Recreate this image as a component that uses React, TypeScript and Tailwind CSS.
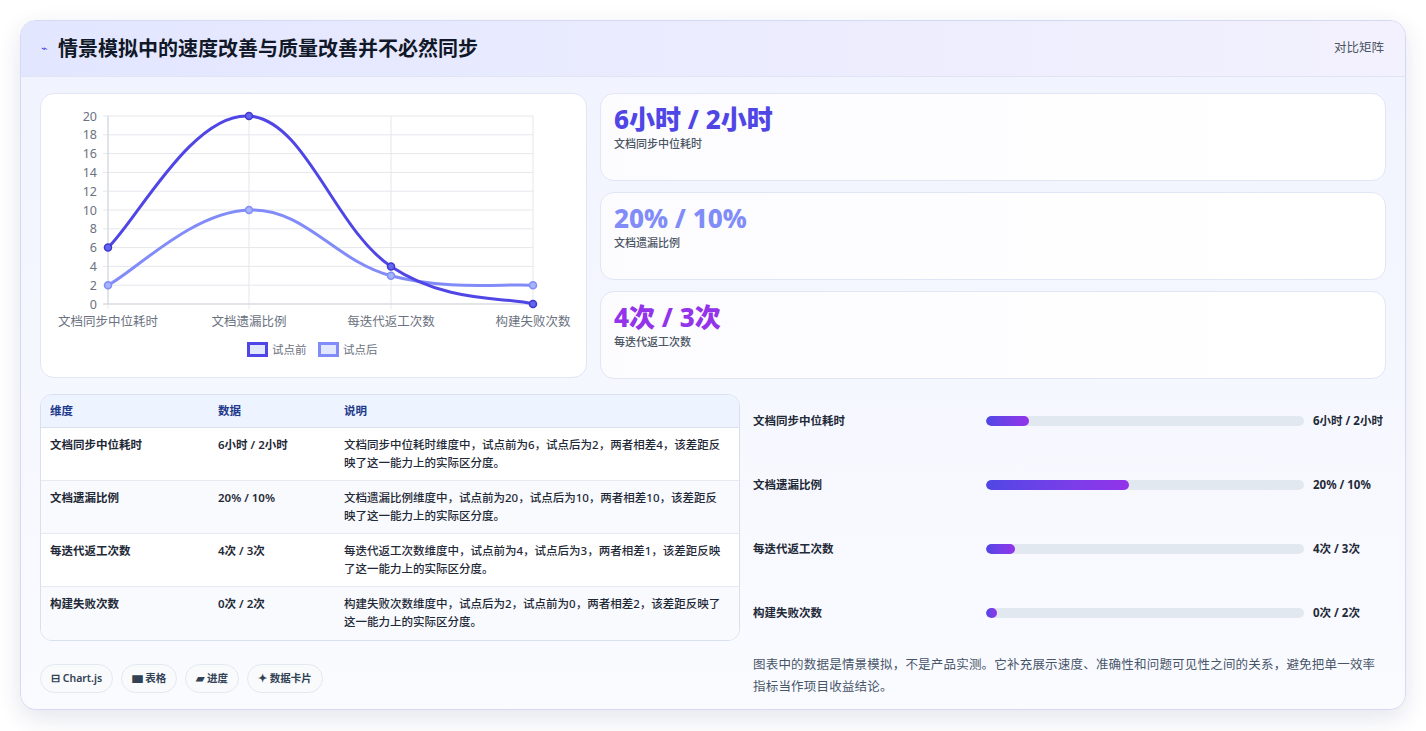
import React from "react";

const font = { fontFamily: '"Noto Sans", "Noto Sans CJK SC", sans-serif' };

type P = [number, number];
function path(pts: P[]) {
  const t = 0.4;
  let d = `M${pts[0][0]},${pts[0][1]}`;
  for (let i = 0; i < pts.length - 1; i++) {
    const p0 = pts[i - 1] || pts[i];
    const p1 = pts[i];
    const p2 = pts[i + 1];
    const p3 = pts[i + 2] || p2;
    const c1: P = [p1[0] + (p2[0] - p0[0]) * t / 2, p1[1] + (p2[1] - p0[1]) * t / 2];
    const c2: P = [p2[0] - (p3[0] - p1[0]) * t / 2, p2[1] - (p3[1] - p1[1]) * t / 2];
    d += ` C${c1[0]},${c1[1]} ${c2[0]},${c2[1]} ${p2[0]},${p2[1]}`;
  }
  return d;
}

function Chart() {
  const xs = [67, 208, 350, 492];
  const y = (v: number) => 210 - v * 9.4;
  const before: P[] = [6, 20, 4, 0].map((v, i) => [xs[i], y(v)]);
  const after: P[] = [2, 10, 3, 2].map((v, i) => [xs[i], y(v)]);
  const labels = ["文档同步中位耗时", "文档遗漏比例", "每迭代返工次数", "构建失败次数"];
  return (
    <svg width="546" height="282" viewBox="0 0 546 282" style={font}>
      {Array.from({ length: 11 }, (_, i) => (
        <g key={i}>
          <line x1="62" x2="492" y1={y(i * 2)} y2={y(i * 2)} stroke="#e5e7eb" strokeWidth="1" />
          <text x="56" y={y(i * 2) + 4.5} textAnchor="end" fontSize="12.5" fill="#6b7280">{i * 2}</text>
        </g>
      ))}
      {xs.map((x, i) => (
        <g key={i}>
          <line x1={x} x2={x} y1="22" y2="215" stroke="#e5e7eb" />
          <text x={x} y="232" textAnchor="middle" fontSize="12.5" fill="#6b7280">{labels[i]}</text>
        </g>
      ))}
      <line x1="67" x2="67" y1="22" y2="210" stroke="#d1d5db" />
      <line x1="62" x2="492" y1="210" y2="210" stroke="#d1d5db" />
      <path d={path(after)} fill="none" stroke="#818cf8" strokeWidth="3" />
      <path d={path(before)} fill="none" stroke="#4f46e5" strokeWidth="3" />
      {after.map((p, i) => <circle key={"a" + i} cx={p[0]} cy={p[1]} r="3.5" fill="#a5b4fc" stroke="#818cf8" strokeWidth="1.5" />)}
      {before.map((p, i) => <circle key={"b" + i} cx={p[0]} cy={p[1]} r="3.5" fill="#6366f1" stroke="#4338ca" strokeWidth="1.5" />)}
      <rect x="207.5" y="249.5" width="18" height="12" fill="#e0e7ff" stroke="#4f46e5" strokeWidth="3" />
      <text x="231" y="259.5" fontSize="11.5" fill="#6b7280">试点前</text>
      <rect x="278.5" y="249.5" width="18" height="12" fill="#e0e7ff" stroke="#818cf8" strokeWidth="3" />
      <text x="302" y="259.5" fontSize="11.5" fill="#6b7280">试点后</text>
    </svg>
  );
}

const stats = [
  { v: "6小时 / 2小时", l: "文档同步中位耗时", c: "text-[#4f46e5]" },
  { v: "20% / 10%", l: "文档遗漏比例", c: "text-[#818cf8]" },
  { v: "4次 / 3次", l: "每迭代返工次数", c: "text-[#9333ea]" },
];

const rows = [
  ["文档同步中位耗时", "6小时 / 2小时", "文档同步中位耗时维度中，试点前为6，试点后为2，两者相差4，该差距反映了这一能力上的实际区分度。"],
  ["文档遗漏比例", "20% / 10%", "文档遗漏比例维度中，试点前为20，试点后为10，两者相差10，该差距反映了这一能力上的实际区分度。"],
  ["每迭代返工次数", "4次 / 3次", "每迭代返工次数维度中，试点前为4，试点后为3，两者相差1，该差距反映了这一能力上的实际区分度。"],
  ["构建失败次数", "0次 / 2次", "构建失败次数维度中，试点后为2，试点前为0，两者相差2，该差距反映了这一能力上的实际区分度。"],
];

const bars = [
  { l: "文档同步中位耗时", v: "6小时 / 2小时", p: 13.5 },
  { l: "文档遗漏比例", v: "20% / 10%", p: 45 },
  { l: "每迭代返工次数", v: "4次 / 3次", p: 9 },
  { l: "构建失败次数", v: "0次 / 2次", p: 3.5 },
];

export default function App() {
  return (
    <div className="w-[1426px] h-[731px] bg-white pt-[20px] pl-[20px]" style={font}>
      <div className="w-[1386px] h-[690px] rounded-[16px] border border-[#d5d9f3] bg-[#f5f7ff] shadow-[0_8px_24px_rgba(30,41,99,0.12)] overflow-hidden flex flex-col">
        <div className="h-[56px] shrink-0 flex items-center justify-between px-[20px] bg-gradient-to-r from-[#e2e6ff] to-[#f3f1fd] border-b border-[#dfe5f5]">
          <div className="flex items-center gap-[10px]">
            <span className="text-[#4f46e5] text-[11px]">⌁</span>
            <span className="text-[20px] font-bold text-[#111827]">情景模拟中的速度改善与质量改善并不必然同步</span>
          </div>
          <span className="text-[12.5px] text-[#4b5563] mr-[1px]">对比矩阵</span>
        </div>
        <div className="flex-1 bg-gradient-to-b from-[#f1f4fe] to-[#fafbff] px-[19px] pt-[16px]">
          <div className="flex gap-[13px]">
            <div className="w-[547px] h-[285px] rounded-[14px] border border-[#e1e6f5] bg-white">
              <Chart />
            </div>
            <div className="flex-1 flex flex-col gap-[11px]">
              {stats.map((s) => (
                <div key={s.l} className="h-[88px] rounded-[14px] border border-[#e1e6f5] bg-gradient-to-r from-[#fcfcff] to-white px-[13px] pt-[7px]">
                  <div className={`text-[26px] font-extrabold leading-[36px] ${s.c}`}>{s.v}</div>
                  <div className="text-[11px] text-[#4b5563] font-medium mt-[-1px]">{s.l}</div>
                </div>
              ))}
            </div>
          </div>
          <div className="flex gap-[13px] mt-[15px]">
            <div className="w-[700px]">
              <div className="rounded-[12px] border border-[#d8e0ef] bg-white overflow-hidden text-[11.5px] text-[#1f2937]">
                <div className="flex h-[33px] items-center bg-[#eef4ff] border-b border-[#d8e0ef] font-semibold text-[#1e3a8a]">
                  <div className="w-[177px] pl-[9px]">维度</div>
                  <div className="w-[126px]">数据</div>
                  <div className="flex-1">说明</div>
                </div>
                {rows.map((r, i) => (
                  <div key={i} className={`flex h-[53px] pt-[8px] ${i % 2 ? "bg-[#f8fafd]" : "bg-white"} ${i < 3 ? "border-b border-[#e5e9f2]" : ""}`}>
                    <div className="w-[177px] pl-[9px] font-semibold">{r[0]}</div>
                    <div className="w-[126px] font-semibold">{r[1]}</div>
                    <div className="flex-1 pr-[12px] leading-[18px] font-medium">{r[2]}</div>
                  </div>
                ))}
              </div>
              <div className="flex gap-[8px] mt-[23px]">
                {["⊟ Chart.js", "▆ 表格", "▰ 进度", "✦ 数据卡片"].map((t) => (
                  <span key={t} className="h-[29px] px-[10px] flex items-center rounded-full border border-[#e2e8f0] bg-[#f8fafc] text-[10.5px] font-semibold text-[#334155]">{t}</span>
                ))}
              </div>
            </div>
            <div className="flex-1">
              <div className="flex flex-col">
                {bars.map((b) => (
                  <div key={b.l} className="h-[64px] flex items-center pb-[18px] pt-[8px]">
                    <div className="w-[233px] text-[11.5px] font-semibold text-[#1f2937]">{b.l}</div>
                    <div className="flex-1 h-[10px] rounded-full bg-[#e2e8f0] overflow-hidden">
                      <div className="h-full rounded-full bg-gradient-to-r from-[#4f46e5] to-[#9333ea]" style={{ width: `${b.p}%` }} />
                    </div>
                    <div className="w-[82px] pl-[9px] text-[11.5px] font-bold text-[#1f2937]">{b.v}</div>
                  </div>
                ))}
              </div>
              <p className="mt-[4px] text-[12.5px] leading-[22px] text-[#475569] pr-[4px] tracking-[0.2px]">图表中的数据是情景模拟，不是产品实测。它补充展示速度、准确性和问题可见性之间的关系，避免把单一效率指标当作项目收益结论。</p>
            </div>
          </div>
        </div>
      </div>
    </div>
  );
}
